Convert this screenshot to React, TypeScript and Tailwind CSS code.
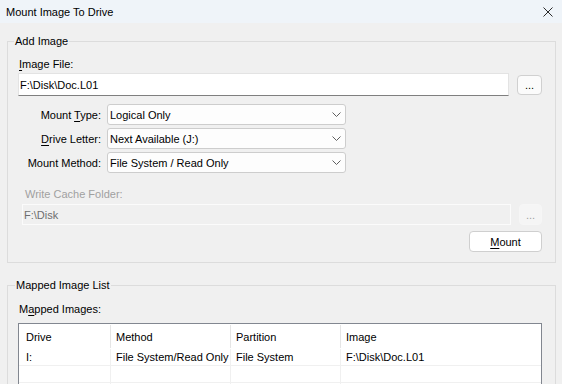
import React from "react";

function Chevron() {
  return (
    <svg width="9" height="5" viewBox="0 0 9 5" className="shrink-0">
      <polyline points="0.5,0.5 4.5,4.5 8.5,0.5" fill="none" stroke="#5f5f5f" strokeWidth="1" />
    </svg>
  );
}

function Select({ value }: { value: string }) {
  return (
    <div className="flex h-[21px] w-[239px] items-center justify-between rounded-[3px] border border-[#cdcdcd] bg-[#fdfdfd] pl-[2px] pr-[4px]">
      <span>{value}</span>
      <Chevron />
    </div>
  );
}

function Row({ label, value }: { label: React.ReactNode; value: string }) {
  return (
    <div className="flex items-center">
      <div className="w-[83px] text-right">{label}</div>
      <div className="ml-[6px]">
        <Select value={value} />
      </div>
    </div>
  );
}

const U = ({ children }: { children: React.ReactNode }) => (
  <span className="underline decoration-1 underline-offset-[2px]">{children}</span>
);

export default function App() {
  const cols = [
    { w: "w-[91px] pl-[7px]" },
    { w: "w-[119px] pl-[5px]" },
    { w: "w-[109px] pl-[5px]" },
    { w: "flex-1 pl-[5px]" },
  ];
  const header = ["Drive", "Method", "Partition", "Image"];
  const rows = [
    ["I:", "File System/Read Only", "File System", "F:\\Disk\\Doc.L01"],
    ["", "", "", ""],
    ["", "", "", ""],
  ];
  return (
    <div className="h-[384px] w-[562px] overflow-hidden bg-[#f0f0f0] font-['Liberation_Sans',Arial,sans-serif] text-[11px] leading-[14px] text-black">
      <div className="flex h-[23px] items-center justify-between bg-[#eff4f9] pl-[6px] pr-[9px]">
        <span>Mount Image To Drive</span>
        <svg width="10" height="10" viewBox="0 0 10 10">
          <path d="M0.5 0.5 L9.5 9.5 M9.5 0.5 L0.5 9.5" stroke="#2b2b2b" strokeWidth="1" fill="none" />
        </svg>
      </div>

      <fieldset className="ml-[7px] mt-[11px] w-[549px] border border-[#dcdcdc] p-0 pb-[10px] pl-[10px] pr-[13px]">
        <legend className="ml-[-4px] px-[1px] leading-[14px]">Add Image</legend>
        <div className="mt-[9px] ml-[1px]">
          <U>I</U>mage File:
        </div>
        <div className="mt-[2px] flex items-center">
          <div className="flex h-[23px] w-[491px] items-center border border-[#e3e3e3] border-b-[#7f7f7f] bg-white pl-[1px]">
            F:\Disk\Doc.L01
          </div>
          <div className="ml-[8px] flex h-[20px] w-[25px] items-center justify-center rounded-[4px] border border-[#d0d0d0] bg-[#fbfbfb]">
            ...
          </div>
        </div>
        <div className="mt-[8px] flex flex-col gap-[3px]">
          <Row label={<>Mount <U>T</U>ype:</>} value="Logical Only" />
          <Row label={<><U>D</U>rive Letter:</>} value="Next Available (J:)" />
          <Row label={<>Mount Method:</>} value="File System / Read Only" />
        </div>
        <div className="ml-[7px] mt-[14px] text-[#a0a0a0]">Write Cache Folder:</div>
        <div className="mt-[3px] flex items-center">
          <div className="ml-[4px] flex h-[21px] w-[489px] items-center border border-[#fbfbfb] bg-[#f0f0f0] pl-[1px] text-[#6e6e6e]">
            F:\Disk
          </div>
          <div className="ml-[8px] flex h-[21px] w-[23px] items-center justify-center rounded-[4px] border border-[#f6f6f6] bg-[#f5f5f5] text-[#a0a0a0]">
            ...
          </div>
        </div>
        <div className="mt-[6px] flex justify-end">
          <div className="flex h-[21px] w-[73px] items-center justify-center rounded-[4px] border border-[#cfcfcf] bg-white">
            <span>
              <U>M</U>ount
            </span>
          </div>
        </div>
      </fieldset>

      <fieldset className="ml-[7px] mt-[15px] w-[549px] border border-[#dcdcdc] p-0 pb-[10px] pl-[10px] pr-[13px]">
        <legend className="ml-[-3px] px-[1px] leading-[14px]">Mapped Image List</legend>
        <div className="mt-[10px] ml-[1px]">
          M<U>a</U>pped Images:
        </div>
        <div className="mt-[7px] w-[524px] border border-[#828790] bg-white">
          <div className="flex h-[25px] items-center">
            {header.map((h, i) => (
              <React.Fragment key={h}>
                <div className={`${cols[i].w}`}>{h}</div>
                {i < 3 && <div className="h-[23px] w-[1px] bg-[#e5e5e5]" />}
              </React.Fragment>
            ))}
          </div>
          {rows.map((r, ri) => (
            <div key={ri} className="flex h-[17px] items-stretch border-b border-[#f0f0f0]">
              {r.map((c, i) => (
                <React.Fragment key={i}>
                  <div className={`${cols[i].w} flex items-center whitespace-nowrap`}>{c}</div>
                  {i < 3 && <div className="w-[1px] bg-[#f0f0f0]" />}
                </React.Fragment>
              ))}
            </div>
          ))}
        </div>
      </fieldset>
    </div>
  );
}
